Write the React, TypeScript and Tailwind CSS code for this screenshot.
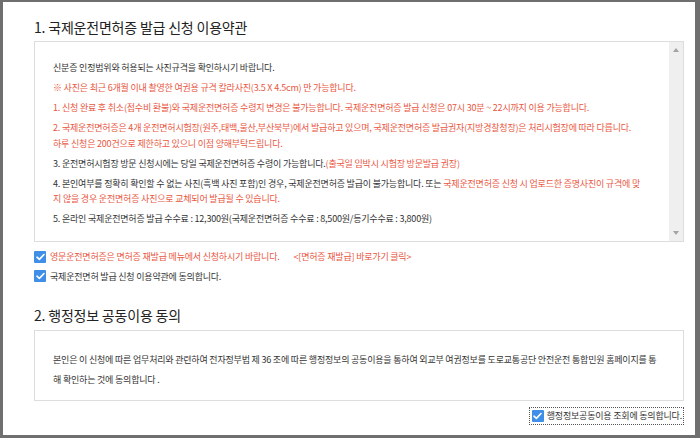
import React from 'react';

const font = { fontFamily: '"Noto Sans CJK KR", "Noto Sans", sans-serif' };

function Check() {
  return (
    <span className="flex h-[12px] w-[12px] shrink-0 items-center justify-center rounded-[1px] bg-[#3f8fe8]">
      <svg width="9" height="8" viewBox="0 0 9 8" fill="none">
        <path d="M1 4.2 L3.4 6.4 L8 1.5" stroke="white" strokeWidth="1.6" strokeLinecap="round" strokeLinejoin="round" />
      </svg>
    </span>
  );
}

function ScrollTrack() {
  return (
    <div className="flex w-[14px] shrink-0 flex-col items-center justify-between bg-[#efefef] py-[6px]">
      <svg width="6" height="4" viewBox="0 0 6 4">
        <path d="M0 4 L3 0 L6 4 Z" fill="#a3a3a3" />
      </svg>
      <svg width="6" height="4" viewBox="0 0 6 4">
        <path d="M0 0 L6 0 L3 4 Z" fill="#a3a3a3" />
      </svg>
    </div>
  );
}

export default function App() {
  const red = 'text-[#e9573f]';
  return (
    <div
      style={font}
      className="h-[438px] w-[700px] border-t-2 border-r-[5px] border-b-[3px] border-l-[3px] border-[#6f6f6f] bg-white pr-[11px] pl-[31px] text-[#333]"
    >
      <h2 className="mt-[16px] text-[14px] leading-[18px] tracking-[-0.2px] text-[#222]">
        1. 국제운전면허증 발급 신청 이용약관
      </h2>

      <div className="mt-[5px] flex h-[201px] border border-[#dddddd]">
        <div className="flex-1 space-y-[4.5px] pt-[18px] pl-[18px] text-[9px] leading-[15.5px] tracking-[-0.2px]">
          <p>신분증 인정범위와 허용되는 사진규격을 확인하시기 바랍니다.</p>
          <p className={red}>※ 사진은 최근 6개월 이내 촬영한 여권용 규격 칼라사진(3.5 X 4.5cm) 만 가능합니다.</p>
          <p className={red}>
            1. 신청 완료 후 취소(접수비 환불)와 국제운전면허증 수령지 변경은 불가능합니다. 국제운전면허증 발급 신청은 07시 30분 ~ 22시까지 이용 가능합니다.
          </p>
          <p className={red}>
            2. 국제운전면허증은 4개 운전면허시험장(원주,태백,울산,부산북부)에서 발급하고 있으며, 국제운전면허증 발급권자(지방경찰청장)은 처리시험장에 따라 다릅니다.
            <br />
            하루 신청은 200건으로 제한하고 있으니 이점 양해부탁드립니다.
          </p>
          <p>
            3. 운전면허시험장 방문 신청시에는 당일 국제운전면허증 수령이 가능합니다.
            <span className={red}>(출국일 임박시 시험장 방문발급 권장)</span>
          </p>
          <p>
            4. 본인여부를 정확히 확인할 수 없는 사진(흑백 사진 포함)인 경우, 국제운전면허증 발급이 불가능합니다. 또는{' '}
            <span className={red}>
              국제운전면허증 신청 시 업로드한 증명사진이 규격에 맞
              <br />
              지 않을 경우 운전면허증 사진으로 교체되어 발급될 수 있습니다.
            </span>
          </p>
          <p>5. 온라인 국제운전면허증 발급 수수료 : 12,300원(국제운전면허증 수수료 : 8,500원/등기수수료 : 3,800원)</p>
        </div>
        <ScrollTrack />
      </div>

      <div className="mt-[8px] flex items-center gap-[4px] text-[9px] tracking-[-0.2px]">
        <Check />
        <span className={red}>
          영문운전면허증은 면허증 재발급 메뉴에서 신청하시기 바랍니다.<span className="ml-[14px]">&lt;[면허증 재발급] 바로가기 클릭&gt;</span>
        </span>
      </div>
      <div className="mt-[6px] flex items-center gap-[4px] text-[9px] tracking-[-0.2px]">
        <Check />
        <span>국제운전면허 발급 신청 이용약관에 동의합니다.</span>
      </div>

      <h2 className="mt-[23px] text-[14px] leading-[18px] tracking-[-0.2px] text-[#222]">2. 행정정보 공동이용 동의</h2>

      <div className="mt-[6px] h-[71px] border border-[#dddddd] pt-[19px] pl-[18px] pr-[18px] text-[9px] leading-[20px] tracking-[-0.2px]">
        본인은 이 신청에 따른 업무처리와 관련하여 전자정부법 제 36 조에 따른 행정정보의 공동이용을 통하여 외교부 여권정보를 도로교통공단 안전운전 통합민원 홈페이지를 통
        <br />
        해 확인하는 것에 동의합니다 .
      </div>

      <div className="mt-[6px] flex justify-end">
        <div className="flex items-center gap-[3px] border border-dotted border-[#555] py-[1px] pr-[1px] pl-[2px] text-[9px] tracking-[-0.2px]">
          <Check />
          <span>행정정보공동이용 조회에 동의합니다.</span>
        </div>
      </div>
    </div>
  );
}
